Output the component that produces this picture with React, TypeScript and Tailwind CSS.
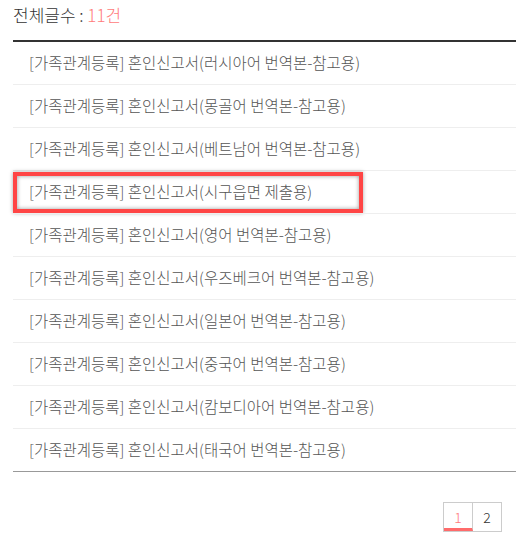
const items = [
  '러시아어 번역본-참고용',
  '몽골어 번역본-참고용',
  '베트남어 번역본-참고용',
  '시구읍면 제출용',
  '영어 번역본-참고용',
  '우즈베크어 번역본-참고용',
  '일본어 번역본-참고용',
  '중국어 번역본-참고용',
  '캄보디아어 번역본-참고용',
  '태국어 번역본-참고용',
];

export default function App() {
  return (
    <div className="w-[516px] h-[539px] bg-white pl-[13px] font-['Noto_Sans_CJK_KR','Noto_Sans',sans-serif] font-light text-[#555]">
      <p className="h-[40px] pt-[3px] text-[17px] leading-[24px] text-[#333]">
        전체글수 : <span className="text-[#ff7b7b]">11건</span>
      </p>

      <ul className="border-t-[2px] border-t-[#333] border-b border-b-[#999]">
        {items.map((t, i) => (
          <li
            key={i}
            className="relative h-[43px] flex items-center pl-[16px] text-[15.5px] border-t border-[#eee] first:border-t-0 first:h-[42px]"
          >
            [가족관계등록] 혼인신고서({t})
            {i === 3 && (
              <span className="absolute left-0 top-[1px] w-[350px] h-[41px] border-[4px] border-[#ff4545] shadow-[inset_0_0_4px_rgba(0,0,0,0.4),0_0_4px_rgba(0,0,0,0.35)]" />
            )}
          </li>
        ))}
      </ul>

      <div className="flex justify-end pr-[14px] mt-[30px]">
        <div className="flex border border-[#ccc] h-[30px] text-[14px]">
          <span className="w-[29px] flex items-center justify-center text-[#ff7b7b] border-r border-[#ccc] border-b-[3px] border-b-[#ff6b6b] pt-[3px]">
            1
          </span>
          <span className="w-[28px] flex items-center justify-center text-[#333]">2</span>
        </div>
      </div>
    </div>
  );
}
